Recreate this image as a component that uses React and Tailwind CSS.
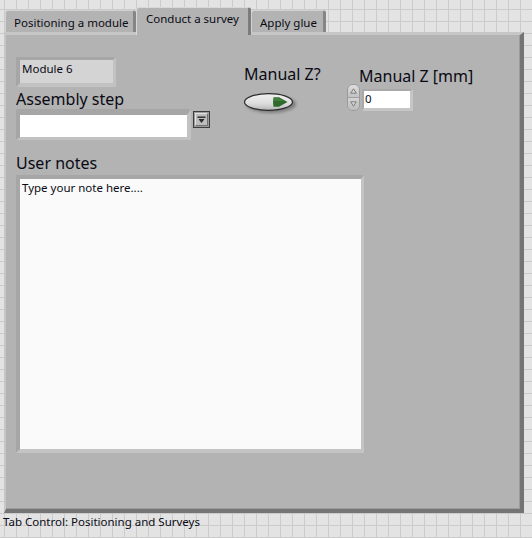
import React from "react";

function Tab({ children, selected, w }) {
  if (selected) {
    return (
      <div
        className={`relative z-10 -mb-[3px] h-[28px] ${w} shrink-0 rounded-t-[3px] border-t border-l border-t-[#d8d8d8] border-l-[#d8d8d8] border-r-[3px] border-r-[#7c7c7c] bg-[#b3b3b3] pl-[9px] pt-[4px] text-[11.5px] leading-[14px] text-[#0a0a14]`}
      >
        {children}
      </div>
    );
  }
  return (
    <div
      className={`h-[22px] ${w} shrink-0 rounded-t-[3px] border-t border-l border-t-[#d2d2d2] border-l-[#d2d2d2] border-r-[3px] border-r-[#858585] bg-[#b3b3b3] pl-[8px] pt-[5px] text-[11.5px] leading-[14px] text-[#0a0a14]`}
    >
      {children}
    </div>
  );
}

function BoolButton() {
  return (
    <svg width="58" height="24" viewBox="0 0 58 24">
      <defs>
        <linearGradient id="bfill" x1="0" y1="0" x2="0" y2="1">
          <stop offset="0" stopColor="#f2f2f2" />
          <stop offset="0.6" stopColor="#dcdcdc" />
          <stop offset="1" stopColor="#b4b4b4" />
        </linearGradient>
        <filter id="blur" x="-20%" y="-40%" width="140%" height="180%">
          <feGaussianBlur stdDeviation="1.6" />
        </filter>
      </defs>
      <ellipse cx="29" cy="13" rx="25" ry="9" fill="#6a6a6a" opacity="0.75" filter="url(#blur)" />
      <ellipse cx="26.5" cy="11" rx="24" ry="8.4" fill="url(#bfill)" stroke="#2a2a2a" strokeWidth="1.2" />
      <path d="M31.5 6.2 L37 6.2 L45.5 11 L37 15.8 L31.5 15.8 Q30.5 11 31.5 6.2 Z" fill="#2f6a2a" />
      <path d="M32 7 L36.5 7 L42 10 L32.5 10 Z" fill="#4d8a46" opacity="0.7" />
    </svg>
  );
}

function Spinner() {
  return (
    <div className="flex h-[27px] w-[13px] flex-col overflow-hidden rounded-[6px] border border-[#9a9a9a] bg-[#c9c9c9]">
      <div className="flex flex-1 items-center justify-center border-b border-[#a0a0a0] bg-[linear-gradient(#dedede,#c2c2c2)]">
        <svg width="7" height="6" viewBox="0 0 7 6">
          <path d="M3.5 0.8 L6.3 5.2 L0.7 5.2 Z" fill="#d6d6d6" stroke="#6a6a6a" strokeWidth="0.8" />
        </svg>
      </div>
      <div className="flex flex-1 items-center justify-center bg-[linear-gradient(#d4d4d4,#bdbdbd)]">
        <svg width="7" height="6" viewBox="0 0 7 6">
          <path d="M3.5 5.2 L6.3 0.8 L0.7 0.8 Z" fill="#d6d6d6" stroke="#6a6a6a" strokeWidth="0.8" />
        </svg>
      </div>
    </div>
  );
}

function DropButton() {
  return (
    <div className="flex h-[17px] w-[17px] items-center justify-center border border-[#3c3c3c] bg-[#9c9c9c] p-[1px]">
      <div className="flex h-full w-full items-center justify-center border-t border-l border-t-[#e0e0e0] border-l-[#e0e0e0] border-r border-b border-r-[#707070] border-b-[#707070] bg-[#bdbdbd]">
        <svg width="9" height="8" viewBox="0 0 9 8">
          <rect x="0.5" y="0.5" width="8" height="1.4" fill="#2a2a2a" />
          <path d="M1.5 3 L7.5 3 L4.5 7 Z" fill="#2a2a2a" />
        </svg>
      </div>
    </div>
  );
}

export default function App() {
  return (
    <div className="h-[538px] w-[532px] overflow-hidden bg-[#e3e3e3] bg-[linear-gradient(to_right,#cbcbcb_1px,transparent_1px),linear-gradient(to_bottom,#cbcbcb_1px,transparent_1px)] pl-[4px] pt-[7px] font-['Noto_Sans',sans-serif] [background-position:4px_9px] [background-size:12px_12px]">
      <div className="w-[520px]">
        <div className="flex h-[25px] items-end pl-[1px]">
          <Tab w="w-[131px]">Positioning a module</Tab>
          <Tab selected w="w-[115px]">Conduct a survey</Tab>
          <Tab w="w-[75px]">Apply glue</Tab>
        </div>
        <div className="h-[481px] border-t-[3px] border-l-[2px] border-t-[#c6c6c6] border-l-[#c6c6c6] border-r-[4px] border-b-[4px] border-r-[#747474] border-b-[#747474] bg-[#b3b3b3] pl-[10px] pt-[22px] shadow-[inset_-1px_-1px_0_#9c9c9c]">
          <div className="flex items-start">
            <div className="flex w-[194px] flex-col">
              <div className="h-[30px] w-[100px] border-t-[3px] border-l-[4px] border-r-[3px] border-b-[4px] border-t-[#a6a6a6] border-l-[#a6a6a6] border-r-[#c2c2c2] border-b-[#c2c2c2] bg-[#d4d4d4] pl-[2px] pt-[2px] text-[11.5px] leading-[14px] text-[#0a0a14]">
                Module 6
              </div>
              <div className="mt-[2px] h-[20px] text-[16px] leading-[20px] text-[#0a0a14]">Assembly step</div>
              <div className="flex items-start">
                <div className="h-[31px] w-[175px] border-t-[6px] border-l-[4px] border-r-[4px] border-b-[3px] border-t-[#a6a6a6] border-l-[#a6a6a6] border-r-[#c2c2c2] border-b-[#c2c2c2] bg-white" />
                <div className="ml-[2px] mt-[2px]">
                  <DropButton />
                </div>
              </div>
            </div>
            <div className="ml-[32px] mt-[7px] flex w-[105px] flex-col">
              <div className="ml-[2px] h-[20px] text-[16px] leading-[20px] text-[#0a0a14]">Manual Z?</div>
              <div className="mt-[7px]">
                <BoolButton />
              </div>
            </div>
            <div className="mt-[9px] flex flex-col">
              <div className="ml-[12px] h-[20px] text-[16px] leading-[20px] text-[#0a0a14]">Manual Z [mm]</div>
              <div className="-mt-[2px] flex items-start">
                <Spinner />
                <div className="ml-[2px] mt-[5px] h-[22px] w-[51px] border-t-[2px] border-l-[2px] border-r-[3px] border-b-[3px] border-t-[#a8a8a8] border-l-[#a8a8a8] border-r-[#c6c6c6] border-b-[#c6c6c6] bg-white pl-[1px] text-[11.5px] leading-[15px] text-[#0a0a14]">
                  0
                </div>
              </div>
            </div>
          </div>
          <div className="mt-[13px] h-[20px] text-[16px] leading-[20px] text-[#0a0a14]">User notes</div>
          <div className="mt-[2px] h-[278px] w-[348px] border-t-[4px] border-l-[4px] border-r-[3px] border-b-[4px] border-t-[#a6a6a6] border-l-[#a6a6a6] border-r-[#c4c4c4] border-b-[#c4c4c4] bg-[#fafafa] pl-[2px] pt-[1px] text-[11.5px] leading-[16px] text-[#0a0a14]">
            Type your note here....
          </div>
        </div>
      </div>
      <div className="mt-[2px] -ml-[1px] text-[11.5px] leading-[14px] text-[#0a0a14]">Tab Control: Positioning and Surveys</div>
    </div>
  );
}
